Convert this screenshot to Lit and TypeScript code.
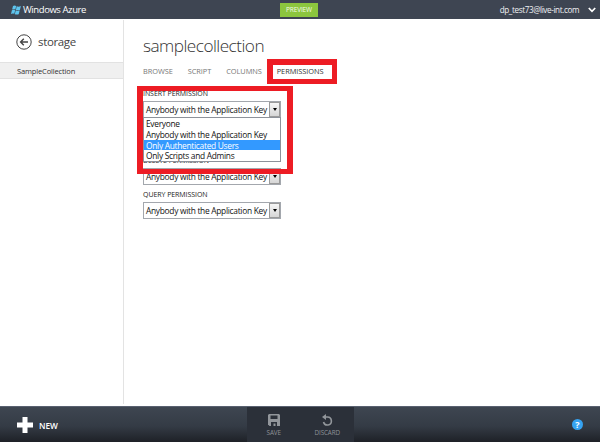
import { LitElement, html, css, svg } from "lit";
import { customElement, property } from "lit/decorators.js";

@customElement("permission-field")
class PermissionField extends LitElement {
  @property() label = "";
  @property() value = "Anybody with the Application Key";
  @property({ type: Array }) options: string[] = [];
  @property({ type: Number }) active = -1;

  static styles = css`
    :host { display: block; position: relative; height: 33.6px; width: 138px; }
    .label { height: 13px; line-height: 11px; font-size: 7px; letter-spacing: -0.06px; color: #222; white-space: nowrap; }
    .select { display: flex; box-sizing: border-box; width: 138px; height: 17px; border: 1px solid #a3a7ad; background: #fff; }
    .value { flex: 1; min-width: 0; padding-left: 2px; font-size: 8.4px; line-height: 15px; letter-spacing: -0.29px; color: #111; white-space: nowrap; }
    .arrow { box-sizing: border-box; flex: none; width: 11px; margin: 0; border: 1px solid #9a9a9a; background: linear-gradient(#f6f6f6, #d6d6d6); display: flex; align-items: center; justify-content: center; }
    .arrow i { border: 2.5px solid transparent; border-top: 3px solid #000; border-bottom: 0; }
    .menu { position: absolute; z-index: 2; left: 0; top: 29px; width: 138px; box-sizing: border-box; border: 1px solid #8d929a; background: #fff; }
    .option { height: 10.8px; line-height: 12px; padding-left: 2px; font-size: 8.4px; letter-spacing: -0.29px; color: #111; white-space: nowrap; }
    .option.active { background: #3399ff; color: #fff; }
  `;

  render() {
    return html`
      <div class="label">${this.label}</div>
      <div class="select"><span class="value">${this.value}</span><span class="arrow"><i></i></span></div>
      ${this.options.length
        ? html`<div class="menu">${this.options.map((o, i) => html`<div class="option ${i === this.active ? "active" : ""}">${o}</div>`)}</div>`
        : ""}
    `;
  }
}

@customElement("app-root")
class AppRoot extends LitElement {
  static styles = css`
    :host { display: flex; flex-direction: column; position: relative; width: 600px; height: 442px; overflow: hidden; background: #fff; font-family: "Open Sans", "Noto Sans", sans-serif; }
    header { height: 19px; flex: none; box-sizing: border-box; background: #3e4552; color: #fff; display: grid; grid-template-columns: 280px 38px 1fr; align-items: center; }
    .brand { display: flex; align-items: center; padding-left: 11px; gap: 2px; font-size: 9.5px; line-height: 18px; letter-spacing: -0.42px; }
    .preview { height: 14px; line-height: 14px; text-align: center; background: #8cc63e; font-size: 6.5px; letter-spacing: -0.15px; color: #f4fbe9; }
    .account { display: flex; align-items: center; justify-content: flex-end; gap: 9px; padding-right: 4px; font-size: 8.1px; line-height: 18px; letter-spacing: -0.38px; color: #f0f1f3; }
    svg { display: block; flex: none; }
    .body { flex: 1; display: flex; min-height: 0; }
    aside { width: 124px; box-sizing: border-box; border-right: 1px solid #e3e3e3; margin: 1px 0 2px; }
    .back { display: flex; align-items: center; height: 42px; box-sizing: border-box; padding: 2px 0 0 16px; gap: 6px; font-size: 11.5px; letter-spacing: -0.35px; color: #444; }
    .back span { padding-bottom: 2px; }
    .item { height: 17px; box-sizing: border-box; border: 1px solid #e2e2e2; border-width: 1px 0; background: #f0f0f0; padding-left: 17px; font-size: 7.5px; line-height: 16px; letter-spacing: -0.14px; color: #333; }
    main { flex: 1; padding: 16px 0 0 19px; }
    h1 { margin: 0; height: 25px; line-height: 22px; font-weight: 300; font-size: 17.2px; letter-spacing: -0.52px; color: #333; }
    nav { display: flex; gap: 15px; height: 28px; line-height: 22px; font-size: 7.4px; color: #777; white-space: nowrap; }
    .tab { letter-spacing: -0.06px; }
    .selected { color: #333; }
    footer { height: 36px; flex: none; box-sizing: border-box; border-top: 1px solid #596170; background: linear-gradient(#3e4651, #343b45 55%, #1e2127); display: grid; grid-template-columns: 247px 107px 1fr; color: #fff; }
    .new { display: flex; align-items: center; gap: 6px; padding: 1px 0 0 17px; font-size: 8.3px; font-weight: 600; letter-spacing: -0.1px; }
    .commands { background: #2b3039; display: grid; grid-template-columns: 1fr 1fr; color: #8e9298; }
    .command { display: flex; flex-direction: column; align-items: center; gap: 1px; padding-top: 7px; font-size: 6.3px; line-height: 12px; letter-spacing: -0.1px; }
    .help { display: flex; justify-content: flex-end; align-items: center; padding: 0 17px 0 0; }
    .q { width: 11px; height: 11px; border-radius: 50%; background: #35a3f2; text-align: center; font-size: 9px; line-height: 11px; font-weight: 700; }
    .mark { position: absolute; z-index: 5; box-sizing: border-box; border: 5px solid #ed1c24; }
    .mark-tab { left: 267px; top: 59px; width: 70px; height: 25px; border-width: 6px 5px 5px 6px; }
    .mark-field { left: 137px; top: 86px; width: 156px; height: 88px; border-width: 5px 6px 5px 6px; }
  `;

  render() {
    const tabs = ["BROWSE", "SCRIPT", "COLUMNS", "PERMISSIONS"];
    const save = svg`
      <path d="M1 0h10l1 1v11H1.500L0 10.500V1Z" fill="#92969b"/>
      <path d="M2.500 1.500h7V5h-7ZM3 8h6v4H7.500V9.500H5.500V12H3Z" fill="#2b3039"/>`;
    return html`
      <header>
        <div class="brand">
          <svg width="10" height="10" viewBox="0 0 10 10" fill="#5ec4ee">
            <path d="M2 .9Q3.600.1 5.200 1L4.400 4.600Q2.800 3.900 1.100 4.600ZM5.700 1.300Q7.500 2.100 9.900 1.100L8.900 4.900Q6.800 5.800 4.900 4.900ZM.9 5.200Q2.500 4.400 4.200 5.200L3.300 8.800Q1.800 8.100 0 8.900ZM4.700 5.500Q6.700 6.300 8.700 5.400L7.700 9.200Q5.800 10 3.800 9.200Z"/>
          </svg>
          <span>Windows Azure</span>
        </div>
        <div class="preview">PREVIEW</div>
        <div class="account">
          <span>dp_test73@live-int.com</span>
          <svg width="8" height="6" viewBox="0 0 8 6"><path d="M.8 1 4 4.300 7.200 1" fill="none" stroke="#fff" stroke-width="1.700"/></svg>
        </div>
      </header>
      <div class="body">
        <aside>
          <div class="back">
            <svg width="16" height="16" viewBox="0 0 16 16" fill="none" stroke="#444">
              <circle cx="8" cy="8" r="7.200" stroke-width="1"/>
              <path d="M12 8H4.800M7.800 4.800 4.600 8l3.200 3.200" stroke-width="1.400"/>
            </svg>
            <span>storage</span>
          </div>
          <div class="item">SampleCollection</div>
        </aside>
        <main>
          <h1>samplecollection</h1>
          <nav>${tabs.map((t, i) => html`<span class="tab ${i === 3 ? "selected" : ""}">${t}</span>`)}</nav>
          <permission-field label="INSERT PERMISSION" .active=${2}
            .options=${["Everyone", "Anybody with the Application Key", "Only Authenticated Users", "Only Scripts and Admins"]}></permission-field>
          <permission-field value=""></permission-field>
          <permission-field label="DELETE PERMISSION"></permission-field>
          <permission-field label="QUERY PERMISSION"></permission-field>
        </main>
      </div>
      <footer>
        <div class="new">
          <svg width="16" height="16" viewBox="0 0 16 16"><path d="M5.500 0h5v5.500H16v5h-5.500V16h-5v-5.500H0v-5h5.500Z" fill="#fff"/></svg>
          <span>NEW</span>
        </div>
        <div class="commands">
          <div class="command"><svg width="12" height="12" viewBox="0 0 12 12">${save}</svg><span>SAVE</span></div>
          <div class="command">
            <svg width="12" height="12" viewBox="0 0 12 12"><path d="M3.500 3H6.500A4 4 0 1 1 2.500 8" fill="none" stroke="#92969b" stroke-width="1.600"/><path d="M1 3 5 0v6Z" fill="#92969b"/></svg>
            <span>DISCARD</span>
          </div>
        </div>
        <div class="help"><span class="q">?</span></div>
      </footer>
      <div class="mark mark-tab"></div>
      <div class="mark mark-field"></div>
    `;
  }
}
